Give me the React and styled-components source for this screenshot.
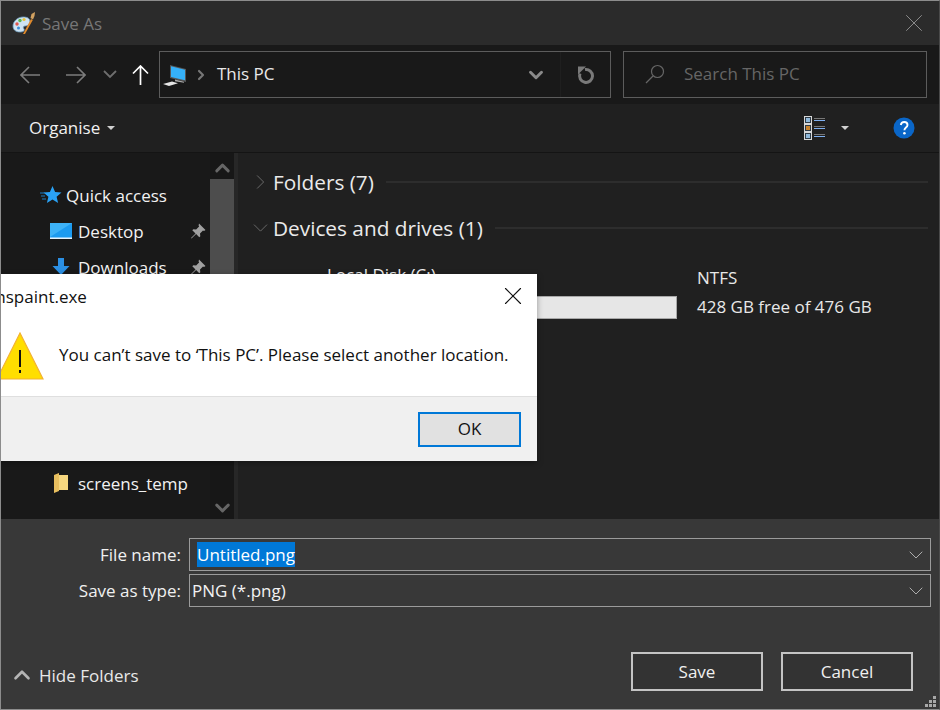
import styled, { createGlobalStyle } from "styled-components";
import { ChevronDown, ChevronRight, ChevronUp, X } from "lucide-react";

const GlobalStyle = createGlobalStyle`
  html, body { margin: 0; padding: 0; background: #202020; }
  #root { width: 940px; height: 710px; }
  * { box-sizing: border-box; }
`;

const Window = styled.div`
  position: relative;
  width: 940px;
  height: 710px;
  overflow: hidden;
  display: flex;
  flex-direction: column;
  border: 1px solid #8c8c8c;
  border-right-color: #4a4a4a;
  background: #202020;
  color: #fff;
  font-family: "Open Sans", "Noto Sans", "Liberation Sans", sans-serif;
  font-size: 17px;
`;

const TitleBar = styled.div`
  height: 44px;
  flex: none;
  display: flex;
  align-items: center;
  background: #2b2b2b;
  padding: 0 10px 0 11px;
  color: #777;
`;

const TitleText = styled.span`
  margin-left: 6px;
  flex: 1;
`;

const NavBar = styled.div`
  height: 59px;
  flex: none;
  display: flex;
  align-items: center;
  background: #191919;
  padding: 0 12px 0 19px;
`;

const NavIcon = styled.svg`
  flex: none;
  margin-left: ${(p) => p.$ml || 0}px;
  display: block;
`;

const AddressBar = styled.div`
  width: 452px;
  height: 47px;
  margin-left: 10px;
  flex: none;
  display: flex;
  align-items: center;
  border: 1px solid #5c5c5c;
  padding-left: 3px;
`;

const AddressText = styled.span`
  flex: 1;
  margin-left: 8px;
  padding-bottom: 2px;
  color: #e8e8e8;
`;

const AddressDrop = styled.div`
  width: 50px;
  height: 100%;
  display: flex;
  align-items: center;
  justify-content: center;
  color: #8a8a8a;
  border-right: 1px solid #1f1f1f;
`;

const Refresh = styled.div`
  width: 49px;
  display: flex;
  align-items: center;
  justify-content: center;
`;

const SearchBox = styled.div`
  width: 304px;
  height: 47px;
  margin-left: 12px;
  flex: none;
  display: flex;
  align-items: center;
  gap: 19px;
  border: 1px solid #5c5c5c;
  padding: 0 0 2px 21px;
  color: #666;
`;

const CommandBar = styled.div`
  height: 49px;
  flex: none;
  display: flex;
  align-items: center;
  background: #202020;
  border-bottom: 1px solid #141414;
  padding: 0 24px 0 28px;
`;

const Organise = styled.div`
  flex: 1;
  display: flex;
  align-items: center;
  gap: 7px;
  padding-bottom: 1px;
  color: #f0f0f0;
`;

const Caret = styled.span`
  width: 0;
  height: 0;
  border-left: 4.5px solid transparent;
  border-right: 4.5px solid transparent;
  border-top: 4.5px solid #d0d0d0;
  margin-left: ${(p) => p.$ml || 0}px;
`;

const HelpGap = styled.span`
  width: 44px;
  flex: none;
`;

const Body = styled.div`
  flex: 1;
  min-height: 0;
  display: flex;
`;

const Sidebar = styled.div`
  width: 237px;
  flex: none;
  display: flex;
  background: #191919;
  border-right: 4px solid #272727;
`;

const TreeList = styled.div`
  width: 209px;
  flex: none;
  padding-top: 24px;
  overflow: hidden;
`;

const TreeRow = styled.div`
  height: 36px;
  display: flex;
  align-items: center;
  padding-left: ${(p) => p.$indent}px;
  padding-right: 4px;
  color: #f2f2f2;
  white-space: nowrap;
`;

const TreeIcon = styled.span`
  width: 24px;
  height: 24px;
  flex: none;
  display: flex;
  align-items: center;
  justify-content: center;
  margin-right: ${(p) => p.$mr}px;
`;

const TreeLabel = styled.span`
  flex: 1;
`;

const ScrollBar = styled.div`
  width: 24px;
  flex: none;
  display: flex;
  flex-direction: column;
  background: #171717;
  color: #666;
`;

const ScrollArrow = styled.div`
  height: 26px;
  flex: none;
  display: flex;
  align-items: center;
  justify-content: center;
  padding: 3px 0 0 1px;
`;

const ScrollThumb = styled.div`
  height: 190px;
  flex: none;
  background: #4d4d4d;
`;

const ScrollGap = styled.div`
  flex: 1;
`;

const Content = styled.div`
  flex: 1;
  padding: 6px 11px 0 10px;
  background: #202020;
`;

const GroupHeader = styled.div`
  height: 46px;
  display: flex;
  align-items: center;
  color: #eaeaea;
  font-size: 20.8px;
`;

const GroupToggle = styled.span`
  width: 25px;
  flex: none;
  display: flex;
  justify-content: center;
  color: #6d6d6d;
`;

const GroupLine = styled.span`
  flex: 1;
  height: 2px;
  background: #2d2d2d;
  margin-left: 12px;
`;

const Drive = styled.div`
  display: flex;
  margin-left: 79px;
  margin-top: 12px;
`;

const DriveLeft = styled.div`
  width: 350px;
  flex: none;
`;

const DriveName = styled.div`
  height: 24px;
  line-height: 24px;
  color: #eee;
`;

const DriveBar = styled.div`
  height: 23px;
  margin-top: 9px;
  border: 1px solid #a8a8a8;
  background: linear-gradient(90deg, #26a0da 0 35px, #e6e6e6 35px);
`;

const DriveInfo = styled.div`
  margin-left: 20px;
  line-height: 29px;
  color: #e8e8e8;
`;

const Footer = styled.div`
  height: 190px;
  flex: none;
  background: #383838;
  display: flex;
  flex-direction: column;
  padding: 19px 8px 0 0;
  position: relative;
`;

const FieldRow = styled.div`
  display: flex;
  align-items: center;
  margin-bottom: 3px;
`;

const FieldLabel = styled.div`
  width: 180px;
  flex: none;
  text-align: right;
  color: #f0f0f0;
`;

const FieldBox = styled.div`
  flex: 1;
  height: 33px;
  margin-left: 8px;
  display: flex;
  align-items: center;
  justify-content: space-between;
  border: 1px solid #9b9b9b;
  padding: 0 2px 0 ${(p) => p.$pl}px;
  color: #f2f2f2;
`;

const Selected = styled.span`
  background: #0078d7;
  height: 25px;
  line-height: 25px;
  color: #fff;
`;

const FooterBottom = styled.div`
  display: flex;
  align-items: center;
  margin-top: 42px;
  padding: 0 18px 0 8px;
`;

const HideFolders = styled.div`
  flex: 1;
  display: flex;
  align-items: center;
  gap: 4px;
  color: #e8e8e8;
  padding-top: 7px;
`;

const DarkButton = styled.div`
  width: 132px;
  height: 39px;
  margin-left: ${(p) => p.$ml || 0}px;
  display: flex;
  align-items: center;
  justify-content: center;
  border: 2px solid #c4c4c4;
  background: #333;
  color: #f0f0f0;
`;

const Grip = styled.svg`
  position: absolute;
  right: 2px;
  bottom: 1px;
`;

const Dialog = styled.div`
  position: absolute;
  left: -64px;
  top: 273px;
  width: 600px;
  height: 187px;
  display: flex;
  flex-direction: column;
  background: #fff;
  color: #111;
  box-shadow: 0 2px 6px rgba(0, 0, 0, 0.35);
`;

const DialogHead = styled.div`
  height: 46px;
  flex: none;
  display: flex;
  align-items: center;
  justify-content: space-between;
  padding: 0 9px 2px 53px;
`;

const DialogMain = styled.div`
  flex: 1;
  display: flex;
  align-items: center;
  padding: 0 0 5px 59px;
  gap: 15px;
`;

const DialogMessage = styled.span`
  padding-bottom: 2px;
`;

const DialogFoot = styled.div`
  height: 65px;
  flex: none;
  display: flex;
  align-items: center;
  justify-content: flex-end;
  padding: 0 16px 0 0;
  background: #f0f0f0;
  border-top: 1px solid #dfdfdf;
`;

const OkButton = styled.div`
  width: 103px;
  height: 35px;
  display: flex;
  align-items: center;
  justify-content: center;
  background: #e1e1e1;
  border: 2px solid #0078d7;
  padding-bottom: 2px;
`;

const PaintIcon = () => (
  <svg width="24" height="24" viewBox="0 0 24 24">
    <path d="M1 15C1 10 6 6 11 6c4 0 7 1 7 5 0 3-3 4-5 4-2 0-2 2-1 3 1 2-1 3-4 3-4 0-7-2-7-6z" fill="#cfe4f3" stroke="#6f9cbc" strokeWidth="0.8" />
    <circle cx="5" cy="13" r="1.700" fill="#e0584e" />
    <circle cx="8" cy="9.500" r="1.700" fill="#5ab552" />
    <circle cx="12" cy="8.500" r="1.600" fill="#e8c33c" />
    <circle cx="6.500" cy="17" r="1.500" fill="#3f8fd8" />
    <path d="M11 23L19 8l1.800 1L13 23z" fill="#e08a2c" />
    <path d="M18.500 7l1-4 3.500-2-.5 4-1.500 3.500z" fill="#d0a060" />
  </svg>
);

const PcIcon = () => (
  <svg width="24" height="24" viewBox="0 0 24 24">
    <path d="M7 2l16 4v13L7 15z" fill="#555" />
    <path d="M8 3.300l14 3.500v10.500L8 14z" fill="#35b0f8" />
    <path d="M12 16.500l9 2.300v1l-9-1.500z" fill="#aaa" />
    <path d="M0 21l9-2.500 6 1.800-9 2.700z" fill="#e6e6e6" />
  </svg>
);

const RefreshIcon = () => (
  <svg width="20" height="20" viewBox="0 0 20 20" fill="none">
    <path d="M9 4.500A6.500 6.500 0 1 1 4 8.500" stroke="#7a7a7a" strokeWidth="3" />
    <path d="M2 1.500h8l-8 8z" fill="#7a7a7a" />
  </svg>
);

const StarIcon = () => (
  <svg width="22" height="20" viewBox="0 0 22 20">
    <path d="M12.500 1l2.600 6 6.400.5-4.900 4.200 1.500 6.300-5.600-3.400-5.600 3.400 1.500-6.300-4.900-4.200 6.400-.5z" fill="#2aa2f5" />
    <path d="M0 8h5M1 11h4M2 14h4" stroke="#1d7fc4" strokeWidth="1" />
  </svg>
);

const DesktopIcon = () => (
  <svg width="22" height="16" viewBox="0 0 22 16">
    <rect width="22" height="16" fill="#1c9bf0" />
    <path d="M0 0h22L0 14z" fill="#3db2f7" />
    <rect y="14.500" width="22" height="1.500" fill="#e6f4fd" />
  </svg>
);

const DownloadIcon = () => (
  <svg width="20" height="20" viewBox="0 0 20 20">
    <path d="M7 1h6v8h5.500L10 18 1.500 9H7z" fill="#2b8fe3" />
  </svg>
);

const PinIcon = () => (
  <svg width="16" height="16" viewBox="0 0 16 16">
    <path d="M9 0.500l6.500 6.500-1.500 1-1-.5-3 3 .3 2.800-1 1-3.200-3.300L1.500 15.500 1 15l4.500-4.600-3.200-3.200 1-1 2.800.3 3-3-.5-1z" fill="#a0a0a0" />
  </svg>
);

const FolderIcon = () => (
  <svg width="16" height="22" viewBox="0 0 16 22">
    <path d="M1 3l5-2v18l-5 2z" fill="#e8bf5f" />
    <path d="M6 3h9v15H6z" fill="#f6d77f" />
  </svg>
);

const ViewsIcon = () => (
  <svg width="22" height="24" viewBox="0 0 22 24">
    {[0, 8, 16].map((y, i) => (
      <g key={y}>
        <rect x="0.500" y={y + 0.5} width="7" height="7" fill="#2e3b46" stroke="#d8d8d8" />
        <rect x="2" y={y + 2} width="4" height="4" fill={i === 1 ? "#c9822b" : "#8fb8da"} />
        <rect x="10" y={y + 2} width="11" height="1" fill="#777" />
        <rect x="10" y={y + 4} width="11" height="1" fill="#7fb0f0" />
      </g>
    ))}
  </svg>
);

const HelpIcon = () => (
  <svg width="22" height="22" viewBox="0 0 22 22">
    <circle cx="11" cy="11" r="10.500" fill="#0a66c8" />
    <path d="M7.800 8c.3-2 1.600-3 3.400-3 2 0 3.300 1.200 3.300 2.900 0 2.600-3.100 2.700-3.100 5.300" fill="none" stroke="#fff" strokeWidth="1.900" />
    <circle cx="11.400" cy="16.300" r="1.300" fill="#fff" />
  </svg>
);

const WarningIcon = () => (
  <svg width="48" height="48" viewBox="0 0 48 48" style={{ flex: "none" }}>
    <path d="M24 1l23 46H1z" fill="#ffde00" stroke="#f2b233" strokeWidth="1.200" />
    <rect x="23" y="18" width="2" height="17" fill="#111" />
    <rect x="23" y="38" width="2" height="3" fill="#111" />
  </svg>
);

const treeRows = [
  { label: "Quick access", indent: 38, mr: 3, icon: <StarIcon /> },
  { label: "Desktop", indent: 48, mr: 5, icon: <DesktopIcon />, pin: true },
  { label: "Downloads", indent: 48, mr: 5, icon: <DownloadIcon />, pin: true },
  { label: "Documents", indent: 48, mr: 5, icon: <FolderIcon />, pin: true },
  { label: "Pictures", indent: 48, mr: 5, icon: <FolderIcon />, pin: true },
  { label: "Screenshots", indent: 48, mr: 5, icon: <FolderIcon /> },
  { label: "Music", indent: 48, mr: 5, icon: <FolderIcon /> },
  { label: "Videos", indent: 48, mr: 5, icon: <FolderIcon /> },
  { label: "screens_temp", indent: 48, mr: 5, icon: <FolderIcon /> },
];

export default function App() {
  return (
    <Window>
      <GlobalStyle />
      <TitleBar>
        <PaintIcon />
        <TitleText>Save As</TitleText>
        <X size={30} strokeWidth={0.8} color="#8a8a8a" />
      </TitleBar>
      <NavBar>
        <NavIcon width="20" height="18" viewBox="0 0 20 18" stroke="#7c7c7c" strokeWidth="1.600" fill="none">
          <path d="M20 9H1M9 1L1 9l8 8" />
        </NavIcon>
        <NavIcon $ml={26} width="20" height="18" viewBox="0 0 20 18" stroke="#7c7c7c" strokeWidth="1.600" fill="none">
          <path d="M0 9h19M11 1l8 8-8 8" />
        </NavIcon>
        <NavIcon $ml={17} width="14" height="9" viewBox="0 0 14 9" stroke="#6e6e6e" strokeWidth="1.800" fill="none">
          <path d="M1 1l6 6 6-6" />
        </NavIcon>
        <NavIcon $ml={15} width="17" height="20" viewBox="0 0 17 20" stroke="#fff" strokeWidth="1.700" fill="none">
          <path d="M8.500 20V1M1 8.500l7.500-7.500L16 8.500" />
        </NavIcon>
        <AddressBar>
          <PcIcon />
          <ChevronRight size={16} strokeWidth={3.200} color="#777" style={{ marginLeft: 6 }} />
          <AddressText>This PC</AddressText>
          <AddressDrop>
            <ChevronDown size={22} strokeWidth={3.200} />
          </AddressDrop>
          <Refresh>
            <RefreshIcon />
          </Refresh>
        </AddressBar>
        <SearchBox>
          <svg width="20" height="20" viewBox="0 0 20 20" fill="none" stroke="#666" strokeWidth="1.200">
            <circle cx="12.500" cy="7.500" r="6" />
            <path d="M8 12L1 19" />
          </svg>
          Search This PC
        </SearchBox>
      </NavBar>
      <CommandBar>
        <Organise>
          Organise
          <Caret />
        </Organise>
        <ViewsIcon />
        <Caret $ml={15} />
        <HelpGap />
        <HelpIcon />
      </CommandBar>
      <Body>
        <Sidebar>
          <TreeList>
            {treeRows.map((row) => (
              <TreeRow key={row.label} $indent={row.indent}>
                <TreeIcon $mr={row.mr}>{row.icon}</TreeIcon>
                <TreeLabel>{row.label}</TreeLabel>
                {row.pin && <PinIcon />}
              </TreeRow>
            ))}
          </TreeList>
          <ScrollBar>
            <ScrollArrow>
              <ChevronUp size={24} strokeWidth={3} />
            </ScrollArrow>
            <ScrollThumb />
            <ScrollGap />
            <ScrollArrow>
              <ChevronDown size={24} strokeWidth={3} />
            </ScrollArrow>
          </ScrollBar>
        </Sidebar>
        <Content>
          <GroupHeader>
            <GroupToggle>
              <ChevronRight size={28} strokeWidth={0.9} />
            </GroupToggle>
            Folders (7)
            <GroupLine />
          </GroupHeader>
          <GroupHeader>
            <GroupToggle>
              <ChevronDown size={28} strokeWidth={0.9} />
            </GroupToggle>
            Devices and drives (1)
            <GroupLine />
          </GroupHeader>
          <Drive>
            <DriveLeft>
              <DriveName>Local Disk (C:)</DriveName>
              <DriveBar />
            </DriveLeft>
            <DriveInfo>
              NTFS
              <br />
              428 GB free of 476 GB
            </DriveInfo>
          </Drive>
        </Content>
      </Body>
      <Footer>
        <FieldRow>
          <FieldLabel>File name:</FieldLabel>
          <FieldBox $pl={7}>
            <Selected>Untitled.png</Selected>
            <ChevronDown size={24} strokeWidth={0.9} color="#bbb" />
          </FieldBox>
        </FieldRow>
        <FieldRow>
          <FieldLabel>Save as type:</FieldLabel>
          <FieldBox $pl={2}>
            PNG (*.png)
            <ChevronDown size={24} strokeWidth={0.9} color="#bbb" />
          </FieldBox>
        </FieldRow>
        <FooterBottom>
          <HideFolders>
            <ChevronUp size={26} strokeWidth={2.400} color="#b5b5b5" />
            Hide Folders
          </HideFolders>
          <DarkButton>Save</DarkButton>
          <DarkButton $ml={18}>Cancel</DarkButton>
        </FooterBottom>
        <Grip width="12" height="12" viewBox="0 0 12 12" fill="#a8a8a8">
          <rect x="8" y="0" width="3" height="3" />
          <rect x="4" y="4" width="3" height="3" />
          <rect x="8" y="4" width="3" height="3" />
          <rect x="0" y="8" width="3" height="3" />
          <rect x="4" y="8" width="3" height="3" />
          <rect x="8" y="8" width="3" height="3" />
        </Grip>
      </Footer>
      <Dialog>
        <DialogHead>
          mspaint.exe
          <X size={30} strokeWidth={0.9} color="#111" />
        </DialogHead>
        <DialogMain>
          <WarningIcon />
          <DialogMessage>You can’t save to ‘This PC’. Please select another location.</DialogMessage>
        </DialogMain>
        <DialogFoot>
          <OkButton>OK</OkButton>
        </DialogFoot>
      </Dialog>
    </Window>
  );
}
